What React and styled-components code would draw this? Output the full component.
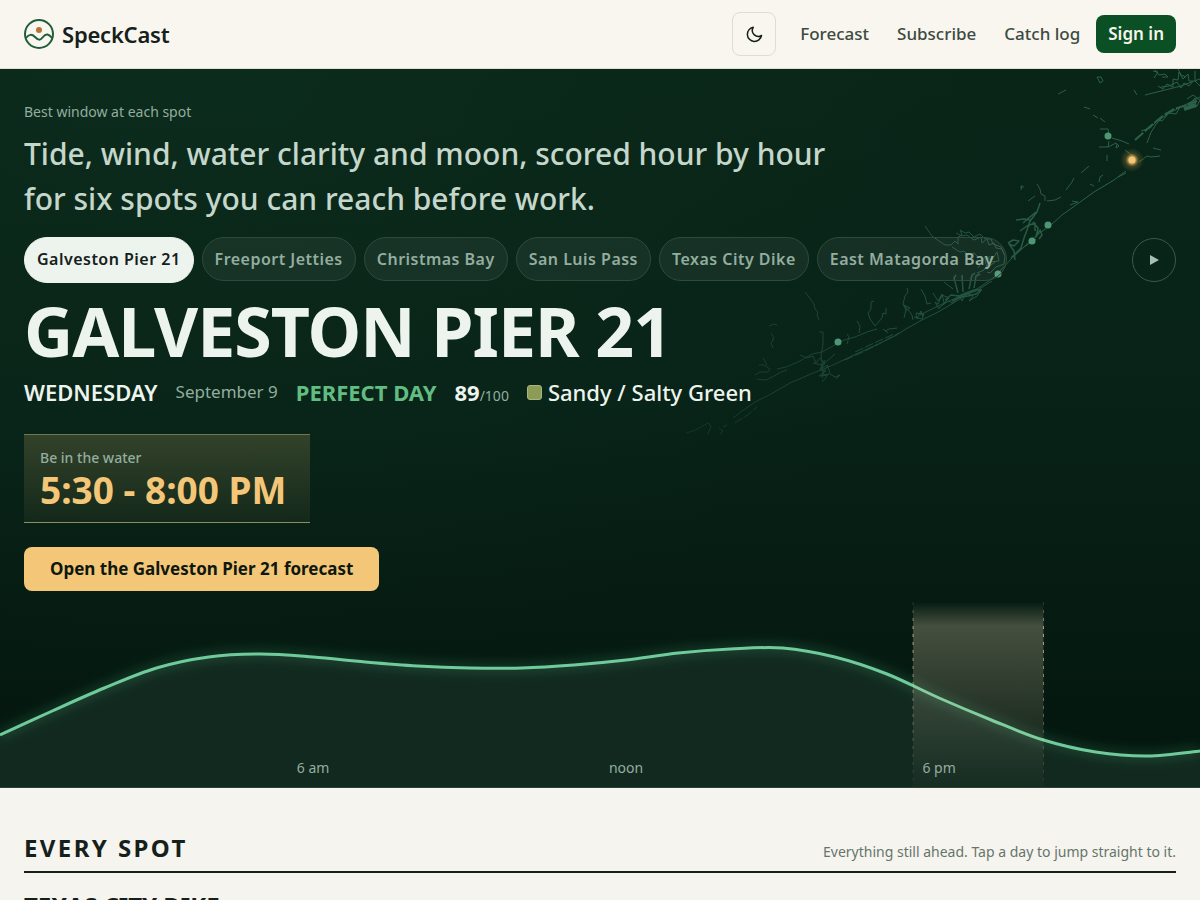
import styled, { createGlobalStyle } from 'styled-components'

const spots = [
  'Galveston Pier 21',
  'Freeport Jetties',
  'Christmas Bay',
  'San Luis Pass',
  'Texas City Dike',
  'East Matagorda Bay',
]

// hourly tide height, drawn top-down inside the 185px chart
const tide = [
  133, 109, 86, 66, 55, 52, 55, 60, 64, 66, 66, 63, 58, 51, 47, 46, 55, 72, 96,
  118, 138, 150, 154, 149,
]

const hours = [
  { hour: 6, label: '6 am' },
  { hour: 12, label: 'noon' },
  { hour: 18, label: '6 pm' },
]

const HEIGHT = 185
const hourToX = (hour) => (hour / 23) * 1200

// Catmull-Rom through every hour
const smooth = (ys) => {
  const p = ys.map((y, i) => [hourToX(i), y])
  let d = `M${p[0]}`
  for (let i = 0; i < p.length - 1; i++) {
    const a = p[i - 1] || p[i]
    const b = p[i]
    const c = p[i + 1]
    const e = p[i + 2] || c
    d += `C${b[0] + (c[0] - a[0]) / 6},${b[1] + (c[1] - a[1]) / 6} ${
      c[0] - (e[0] - b[0]) / 6
    },${c[1] - (e[1] - b[1]) / 6} ${c}`
  }
  return d
}

const GlobalStyle = createGlobalStyle`
  * {
    box-sizing: border-box;
  }

  body {
    margin: 0;
    background: #f6f4ee;
    color: #16201b;
    font-family: 'Noto Sans', sans-serif;
    font-size: 17px;
  }

  button {
    font: inherit;
    cursor: pointer;
  }

  a {
    color: inherit;
    text-decoration: none;
  }
`

const Header = styled.header`
  display: flex;
  justify-content: space-between;
  align-items: center;
  height: 69px;
  padding: 0 24px;
  background: #f9f6ef;
  border-bottom: 1px solid #dde0d6;
  line-height: 24px;
`

const Brand = styled.a`
  display: flex;
  align-items: center;
  gap: 8px;
  font-size: 22px;
  font-weight: 600;
  letter-spacing: -0.01em;
`

const Nav = styled.nav`
  display: flex;
  align-items: center;
  gap: 16px;
`

const NavLinks = styled.div`
  display: flex;
  gap: 28px;
  padding-left: 8px;
  color: #3c4a42;
  font-weight: 500;
`

const ThemeButton = styled.button`
  display: grid;
  place-items: center;
  width: 44px;
  height: 44px;
  padding: 0;
  border: 1px solid #dedcd4;
  border-radius: 8px;
  background: none;
  color: #16201b;
`

const SignIn = styled.a`
  padding: 0 12px;
  border-radius: 8px;
  background: #0b5024;
  color: #f7f4ed;
  font-weight: 600;
  line-height: 38px;
`

const Hero = styled.section`
  position: relative;
  border-bottom: 1px solid #2c4035;
  background: radial-gradient(
      ellipse at 15% 0%,
      rgba(16, 56, 36, 0.35),
      transparent 60%
    ),
    linear-gradient(#092518, #082217 45%, #04160e);
  color: #edf4ee;
`

const HeroBody = styled.div`
  position: relative;
  display: flex;
  flex-direction: column;
  align-items: flex-start;
  padding: 32px 24px 11px;
`

const Coast = styled.svg`
  position: absolute;
  top: 0;
  right: 0;
  width: 520px;
  height: 372px;
`

const Eyebrow = styled.p`
  margin: 0;
  color: #93ad9f;
  font-size: 14px;
  line-height: 22px;
`

const Lead = styled.p`
  max-width: 820px;
  margin: 8px 0 16px;
  color: #c5d6cb;
  font-size: 30px;
  font-weight: 500;
  line-height: 45px;
`

const SpotRow = styled.div`
  display: flex;
  justify-content: space-between;
  align-items: center;
  width: 100%;
`

const SpotList = styled.div`
  display: flex;
  align-items: flex-start;
  gap: 8px;
`

const SpotButton = styled.button`
  height: ${(props) => (props.$active ? '46px' : '44px')};
  padding: 0 12px ${(props) => (props.$active ? '2px' : 0)};
  border: 1px solid ${(props) => (props.$active ? '#edf4ee' : '#2d4a3c')};
  border-radius: 23px;
  background: ${(props) =>
    props.$active ? '#edf4ee' : 'rgba(237, 244, 238, 0.06)'};
  color: ${(props) => (props.$active ? '#16201b' : '#93ad9f')};
  font-size: 16px;
  font-weight: 600;
  letter-spacing: 0.03em;
`

const PlayButton = styled.button`
  display: grid;
  place-items: center;
  width: 44px;
  height: 44px;
  padding: 0;
  border: 1px solid #3b5849;
  border-radius: 50%;
  background: none;
  color: #a9bfb2;
`

const SpotName = styled.h1`
  margin: 14px 0 11px;
  font-size: 68px;
  font-weight: 700;
  letter-spacing: -1px;
  line-height: 68px;
`

const Summary = styled.div`
  display: flex;
  align-items: baseline;
  gap: 18px;
  font-size: 22px;
  line-height: 32px;
`

const Day = styled.span`
  font-weight: 600;
`

const DateText = styled.span`
  align-self: flex-start;
  color: #93ad9f;
  font-size: 17px;
`

const Rating = styled.span`
  color: #62bd82;
  font-weight: 700;
`

const Score = styled.span`
  font-weight: 700;

  small {
    color: #93ad9f;
    font-size: 14px;
    font-weight: 400;
  }
`

const Water = styled.span`
  font-weight: 500;

  &::before {
    content: '';
    display: inline-block;
    width: 13px;
    height: 13px;
    margin-right: 6px;
    border: 1px solid #a9b583;
    border-radius: 3px;
    background: #8c9c57;
    vertical-align: 1px;
  }
`

const TimeWindow = styled.div`
  margin: 22px 0 24px;
  padding: 12px 24px 12px 16px;
  border-top: 1px solid #6d7850;
  border-bottom: 1px solid #8a8f62;
  background: linear-gradient(
    rgba(243, 199, 119, 0.18),
    rgba(243, 199, 119, 0.05)
  );
`

const TimeLabel = styled.div`
  color: #93ad9f;
  font-size: 14px;
  font-weight: 500;
  line-height: 22px;
`

const Time = styled.div`
  color: #f3c777;
  font-size: 37px;
  font-weight: 700;
  line-height: 41px;
`

const ForecastLink = styled.a`
  padding: 0 26px;
  border-radius: 8px;
  background: #f3c777;
  color: #10170f;
  font-weight: 700;
  line-height: 44px;
`

const Chart = styled.div`
  position: relative;
  height: ${HEIGHT}px;

  svg {
    display: block;
    width: 100%;
    height: 100%;
  }
`

const HourLabel = styled.span`
  position: absolute;
  bottom: 8px;
  transform: translateX(-50%);
  color: #93ad9f;
  font-size: 14px;
  line-height: 22px;
`

const Section = styled.section`
  padding: 43px 24px;
`

const SectionHead = styled.div`
  display: flex;
  justify-content: space-between;
  align-items: baseline;
  padding-bottom: 7px;
  border-bottom: 2px solid #16201b;

  h2 {
    margin: 0;
    font-size: 24px;
    font-weight: 700;
    letter-spacing: 0.1em;
    line-height: 33px;
  }

  p {
    margin: 0;
    color: #66746c;
    font-size: 14px;
  }
`

const SpotTitle = styled.h3`
  margin: 16px 0 0;
  font-size: 24px;
  font-weight: 700;
  line-height: 33px;
`

const Logo = () => (
  <svg width="30" height="30" viewBox="0 0 30 30" fill="none" aria-hidden="true">
    <circle cx="15" cy="15" r="14" stroke="#1f5e38" strokeWidth="2" />
    <circle cx="15" cy="11" r="3" fill="#b87333" />
    <path
      d="M2 19C5 15 8 15 11 18S16 22 19 18 25 15 28 19"
      stroke="#1f5e38"
      strokeWidth="2"
    />
  </svg>
)

const MoonIcon = () => (
  <svg
    width="18"
    height="18"
    viewBox="0 0 24 24"
    fill="none"
    stroke="currentColor"
    strokeWidth="2"
    strokeLinejoin="round"
    aria-hidden="true"
  >
    <path d="M11 3a8 8 0 0 0 11 11A9.500 9.500 0 1 1 11 3Z" />
  </svg>
)

const PlayIcon = () => (
  <svg width="10" height="12" viewBox="0 0 10 12" fill="currentColor" aria-hidden="true">
    <path d="M1 1L10 6L1 11Z" />
  </svg>
)

const CoastMap = () => (
  <Coast viewBox="680 69 520 372" fill="none" aria-hidden="true">
    <defs>
      <linearGradient id="coastFade" x1="680" x2="1200" y1="0" y2="0" gradientUnits="userSpaceOnUse">
        <stop offset="0" stopColor="#fff" stopOpacity="0.3" />
        <stop offset="0.4" stopColor="#fff" stopOpacity="0.7" />
        <stop offset="0.8" stopColor="#fff" />
      </linearGradient>
      <mask id="coastMask" maskUnits="userSpaceOnUse" x="680" y="69" width="520" height="372">
        <rect x="680" y="69" width="520" height="372" fill="url(#coastFade)" />
      </mask>
      <radialGradient id="beacon">
        <stop offset="0.3" stopColor="#f3b754" stopOpacity="0.75" />
        <stop offset="0.55" stopColor="#f3b754" stopOpacity="0.2" />
        <stop offset="1" stopColor="#f3b754" stopOpacity="0" />
      </radialGradient>
    </defs>
    <g mask="url(#coastMask)" stroke="#2c6149" strokeWidth="1" strokeLinejoin="round">
      {/* barrier islands */}
      <path d="M733 418l9-7 13-9 16-8 19-11 21-9 22-9 21-10 22-10 19-9 11-7 14-8 20-10 23-14 17-10 13-9 9-9 8-9 14-13 13-12 15-11 10-9 14-10 18-13 20-12 12-9" />
      <path d="M735 423l14-9 8-7M845 360l18-8 16-8 20-11M855 352l17-8 22-10" strokeDasharray="9 2" />
      <path d="M920 315l18-9 20-9 18-6 16-10M1012 257l12-10 12-8M1118 177l8-4M1139 162l8-6 4 1 9-1" />
      <path d="M1147 143q6-22 24-31t29-15" />
      <path d="M1135 140l9-8 9-8 11-9 10-6 13-4 10-4" strokeDasharray="11 2" strokeWidth="2" />
      <path d="M1141 131l9-3 8-8 4 1 7-8 7 1 4-7" />
      {/* bays and bayous, west to east */}
      <path d="M686 433l7-2 8-4 7-4 3 3-3 8M719 428l4 3-3 3M727 425l-4 2" />
      <path d="M755 375l5-3 8 0 2-3-6-4-5 0M757 379l9 1 8-4 7-4 6-2" />
      <path d="M767 365l-4-7M773 348l-2-5 3-5-3-5M769 326l5-2 3 1M772 339l2 1" />
      <path d="M777 369l9-2 12-5 14-8 10-2 11-6 11-6 11-3 12-5 10-3M800 355l7 3 6-2 3 7 4-5 5 5-5 7 6 1-7 5 9-1-6 7" />
      <path d="M819 332l4 0 0 12-2 12 2 14-1 8M813 363l9 2 5-4 8-7M825 360l-5 9 8-4-6 10 7-1M828 366l2 8 5 3 5-2-4 4" />
      <path d="M805 292l4 5 5 7 1 5 3 3-1 3 2 5M847 344l2-7-2-3M859 333l1-7-3-5M875 326l-5-7-2-6 3-4 0-7 3-1M875 326l7-8 1-5 3 1 0-6M885 331l4-2 8-1M883 329l5 4" />
      <path d="M904 318l2-8-3-6 2-8 3-4-1-4M908 310l4 5 1 5M914 317l8 2 2-5-8-1 1 6 4-8 2 6M905 311l5-3-6-3 3 4" />
      <path d="M921 289l4 7 2 8 4-1M933 293l5 8 4-7 2 9 5-5-7-3-4 9-3-2 4 7M944 282l9 7M939 308l9-7 5 2 6-7 3 5 4-8 7 3-4 5 8-5 5-7" />
      <path d="M945 300l6-5 8 1 7-3 8-3 7 0-5 4-8 2-7 1-9 4M958 293l-4-15 2-3M963 292l-1-17M969 289l3-14 3-2M974 288l2-12 4-2" strokeWidth="1.5" />
      <path d="M925 226l7 10 7 5 6 4 6 0 4-4 3 3 0-7 4-2-2-5 5 3 4-1 5 5 6-3 5 5 6 0 2 5 8 3 3 7" />
      <path d="M956 233l6 3 5-1 7 5 7-3 1 6 5-4 2 6 5-2 2 5 6 1 3 7-1 8-8 3-6 6-3-1M952 247l8 5 4-1 4 4 6-2 3 3M978 268l7-11 7 3 5-8 2 9-9 1-6 8-7 3M990 256l-5 4 2 8 8-6" />
      <path d="M1008 243l5-3 6 1-5 5-5-2 5 7 1 9M1011 258l10-10 3-10 3-8 3-9 7-9 3-9M1016 220l8-1 6 1 4-3M1023 223l7-6 6-5M1020 231l7-5 8-3 0 8M1033 222l5 6-2 9 4-7 2 5-3 4" strokeWidth="1.5" />
      <path d="M1037 184l3 5 1 5 4 2 0 5M1020 187h4M1022 185l-1 5M1028 201l7-5" />
      <path d="M1047 201l8-1 6-3M1066 190l6-8 2-4M1081 173l8-7M1070 205l8-3-6-1M1090 184l4 2M1099 182l1-5 3-2" />
      <path d="M1058 94l8-4M1084 107l6 2M1093 115l5 3M1100 118l5 4M1100 129l8 0 1 6M1112 138l10 3 7 3M1099 147h9l1-6M1108 147l8-4 3 3-3 2 1-4M1107 155v6" />
      <path d="M1097 77l4 0 2 4-3 2zM1134 90l3 5M1125 150l8 6M1153 148l8 2" />
      <path d="M1145 95l16-4 20-5 13-5 6-2" />
      <path d="M1153 71l5 1-4 6M1155 70l4 5 6-1 3 3-6 0M1158 86l5 3 4-5 6 3 0-8 5 1 1-8 4 7 5-5 1 7 4 0-4 5-5-3-3 5-4-6-8 4-8 1M1178 69l3 6 5 2M1195 71v10l5 5M1187 99l6-4 7 5-3 6-7-2 5-6 1 9-9-3" />
      <path d="M1184 109l12-4" strokeWidth="4" />
    </g>
    <g fill="#4e9775">
      <circle cx="838" cy="342" r="3.5" />
      <circle cx="998" cy="274" r="3.5" />
      <circle cx="1032" cy="241" r="3.5" />
      <circle cx="1048" cy="225" r="3.5" />
      <circle cx="1108" cy="136" r="3.5" />
    </g>
    <circle cx="1132" cy="160" r="12" fill="url(#beacon)" />
    <circle cx="1132" cy="160" r="3.5" fill="#f3c777" />
  </Coast>
)

const TideChart = () => {
  const curve = smooth(tide)
  const start = hourToX(17.5)
  const end = hourToX(20)

  return (
    <Chart>
      <svg viewBox={`0 0 1200 ${HEIGHT}`} preserveAspectRatio="none" aria-hidden="true">
        <defs>
          <linearGradient id="band" x1="0" x2="0" y1="0" y2="1">
            <stop offset="0" stopColor="#f0dcb8" stopOpacity="0" />
            <stop offset="0.13" stopColor="#f0dcb8" stopOpacity="0.27" />
            <stop offset="1" stopColor="#f0dcb8" stopOpacity="0.02" />
          </linearGradient>
          <linearGradient id="edge" gradientUnits="userSpaceOnUse" x1="0" x2="0" y1="0" y2={HEIGHT}>
            <stop offset="0" stopColor="#e8dcb8" stopOpacity="0.1" />
            <stop offset="0.15" stopColor="#e8dcb8" stopOpacity="0.7" />
            <stop offset="1" stopColor="#e8dcb8" stopOpacity="0.05" />
          </linearGradient>
          <filter id="glow" x="-5%" y="-50%" width="110%" height="200%">
            <feGaussianBlur stdDeviation="6" />
          </filter>
        </defs>
        <path d={`${curve}V${HEIGHT}H0Z`} fill="#12291f" />
        <path d={curve} fill="none" stroke="#3f9a6c" strokeOpacity="0.4" strokeWidth="6" filter="url(#glow)" />
        <path d={curve} fill="none" stroke="#70cb9c" strokeWidth="3" />
        <rect x={start} width={end - start} height={HEIGHT} fill="url(#band)" />
        <path
          d={`M${start} 0V${HEIGHT}M${end} 0V${HEIGHT}`}
          stroke="url(#edge)"
          strokeDasharray="3 5"
        />
      </svg>
      {hours.map(({ hour, label }) => (
        <HourLabel key={hour} style={{ left: `${(hour / 23) * 100}%` }}>
          {label}
        </HourLabel>
      ))}
    </Chart>
  )
}

const App = () => (
  <>
    <GlobalStyle />
    <Header>
      <Brand href="#">
        <Logo />
        SpeckCast
      </Brand>
      <Nav>
        <ThemeButton aria-label="Switch to dark theme">
          <MoonIcon />
        </ThemeButton>
        <NavLinks>
          <a href="#forecast">Forecast</a>
          <a href="#subscribe">Subscribe</a>
          <a href="#log">Catch log</a>
        </NavLinks>
        <SignIn href="#signin">Sign in</SignIn>
      </Nav>
    </Header>
    <main>
      <Hero>
        <CoastMap />
        <HeroBody>
          <Eyebrow>Best window at each spot</Eyebrow>
          <Lead>
            Tide, wind, water clarity and moon, scored hour by hour for six
            spots you can reach before work.
          </Lead>
          <SpotRow>
            <SpotList>
              {spots.map((spot, i) => (
                <SpotButton key={spot} $active={i === 0}>
                  {spot}
                </SpotButton>
              ))}
            </SpotList>
            <PlayButton aria-label="Play through the spots">
              <PlayIcon />
            </PlayButton>
          </SpotRow>
          <SpotName>GALVESTON PIER 21</SpotName>
          <Summary>
            <Day>WEDNESDAY</Day>
            <DateText>September 9</DateText>
            <Rating>PERFECT DAY</Rating>
            <Score>
              89<small>/100</small>
            </Score>
            <Water>Sandy / Salty Green</Water>
          </Summary>
          <TimeWindow>
            <TimeLabel>Be in the water</TimeLabel>
            <Time>5:30 - 8:00 PM</Time>
          </TimeWindow>
          <ForecastLink href="#galveston">
            Open the Galveston Pier 21 forecast
          </ForecastLink>
        </HeroBody>
        <TideChart />
      </Hero>
      <Section>
        <SectionHead>
          <h2>EVERY SPOT</h2>
          <p>Everything still ahead. Tap a day to jump straight to it.</p>
        </SectionHead>
        <SpotTitle>TEXAS CITY DIKE</SpotTitle>
      </Section>
    </main>
  </>
)

export default App
